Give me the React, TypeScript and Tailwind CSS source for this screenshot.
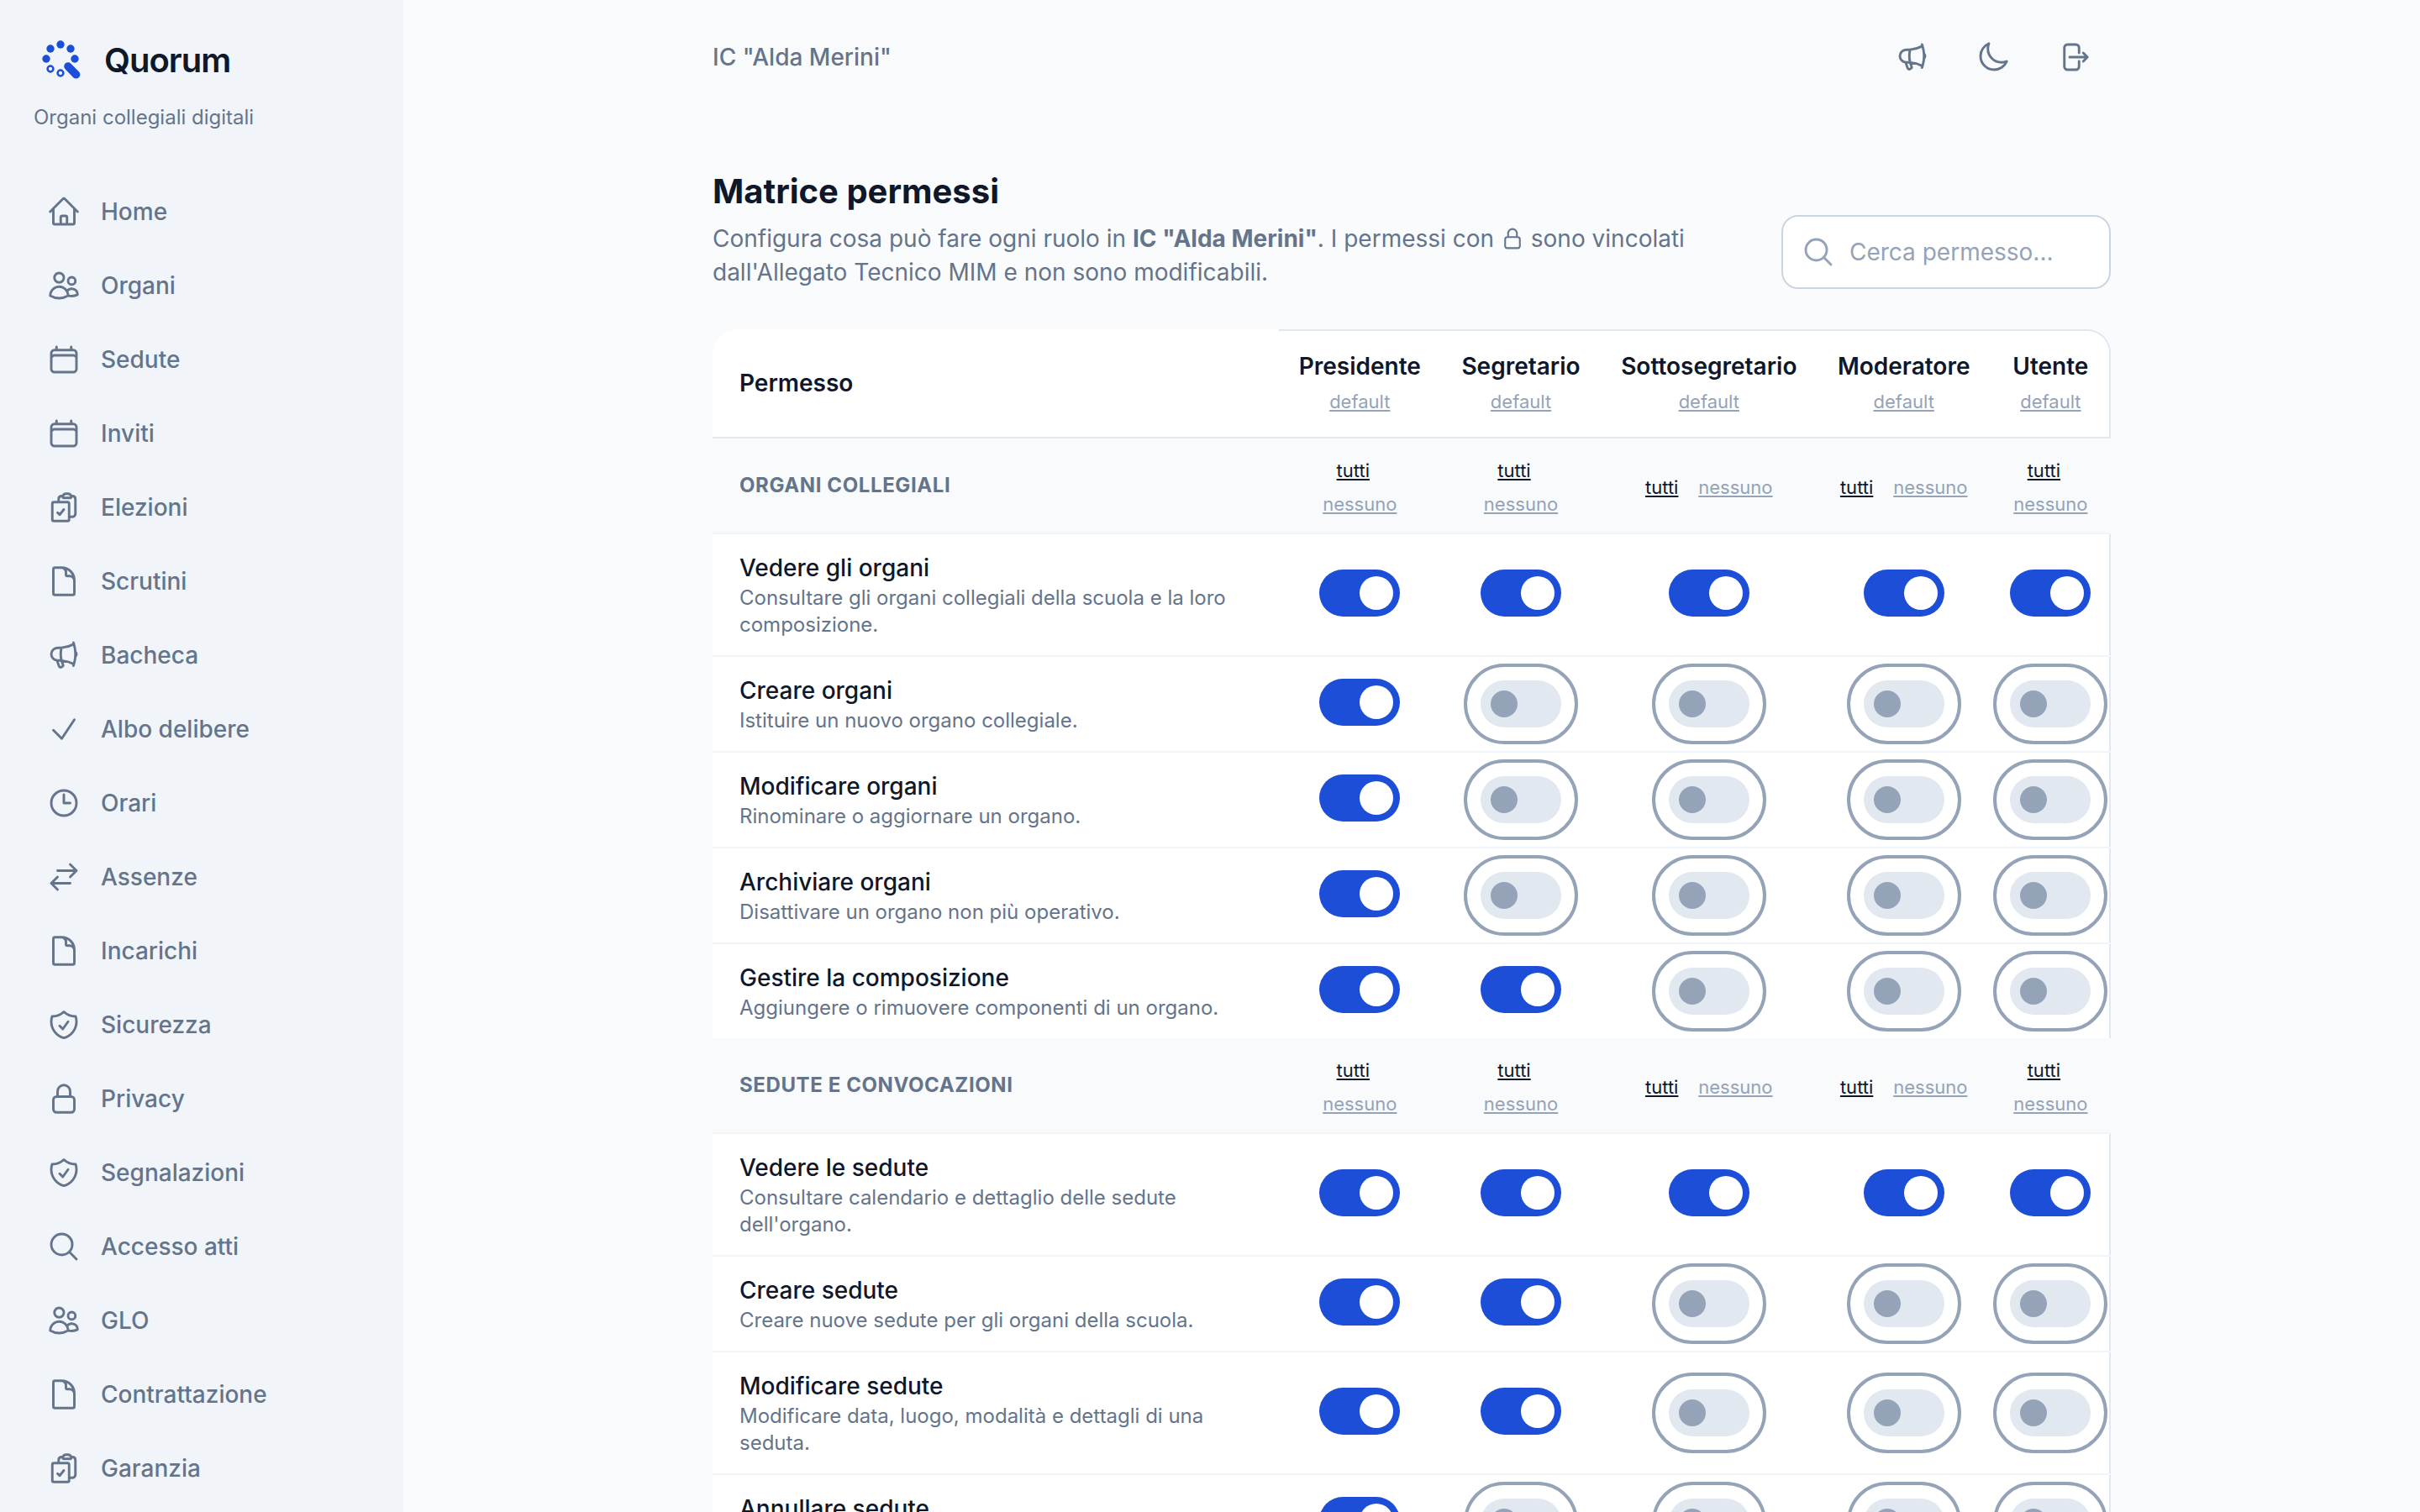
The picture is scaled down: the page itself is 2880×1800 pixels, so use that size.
import React from "react";
import type { IconType } from "react-icons";
import {
  HiOutlineArrowRightOnRectangle,
  HiOutlineArrowsRightLeft,
  HiOutlineCalendar,
  HiOutlineCheck,
  HiOutlineClipboardDocumentCheck,
  HiOutlineClock,
  HiOutlineDocument,
  HiOutlineHome,
  HiOutlineLockClosed,
  HiOutlineMagnifyingGlass,
  HiOutlineMegaphone,
  HiOutlineMoon,
  HiOutlineShieldCheck,
  HiOutlineUsers,
} from "react-icons/hi2";

const NAV: { label: string; icon: IconType }[] = [
  { label: "Home", icon: HiOutlineHome },
  { label: "Organi", icon: HiOutlineUsers },
  { label: "Sedute", icon: HiOutlineCalendar },
  { label: "Inviti", icon: HiOutlineCalendar },
  { label: "Elezioni", icon: HiOutlineClipboardDocumentCheck },
  { label: "Scrutini", icon: HiOutlineDocument },
  { label: "Bacheca", icon: HiOutlineMegaphone },
  { label: "Albo delibere", icon: HiOutlineCheck },
  { label: "Orari", icon: HiOutlineClock },
  { label: "Assenze", icon: HiOutlineArrowsRightLeft },
  { label: "Incarichi", icon: HiOutlineDocument },
  { label: "Sicurezza", icon: HiOutlineShieldCheck },
  { label: "Privacy", icon: HiOutlineLockClosed },
  { label: "Segnalazioni", icon: HiOutlineShieldCheck },
  { label: "Accesso atti", icon: HiOutlineMagnifyingGlass },
  { label: "GLO", icon: HiOutlineUsers },
  { label: "Contrattazione", icon: HiOutlineDocument },
  { label: "Garanzia", icon: HiOutlineClipboardDocumentCheck },
];

const ROLES = ["Presidente", "Segretario", "Sottosegretario", "Moderatore", "Utente"];

type Permission = { title: string; description?: string; granted: number };
type Category = { name: string; permissions: Permission[] };

// `granted` is the number of roles, from the first column on, that hold the permission.
const CATEGORIES: Category[] = [
  {
    name: "Organi collegiali",
    permissions: [
      {
        title: "Vedere gli organi",
        description: "Consultare gli organi collegiali della scuola e la loro composizione.",
        granted: 5,
      },
      { title: "Creare organi", description: "Istituire un nuovo organo collegiale.", granted: 1 },
      { title: "Modificare organi", description: "Rinominare o aggiornare un organo.", granted: 1 },
      { title: "Archiviare organi", description: "Disattivare un organo non più operativo.", granted: 1 },
      {
        title: "Gestire la composizione",
        description: "Aggiungere o rimuovere componenti di un organo.",
        granted: 2,
      },
    ],
  },
  {
    name: "Sedute e convocazioni",
    permissions: [
      {
        title: "Vedere le sedute",
        description: "Consultare calendario e dettaglio delle sedute dell'organo.",
        granted: 5,
      },
      { title: "Creare sedute", description: "Creare nuove sedute per gli organi della scuola.", granted: 2 },
      {
        title: "Modificare sedute",
        description: "Modificare data, luogo, modalità e dettagli di una seduta.",
        granted: 2,
      },
      { title: "Annullare sedute", granted: 1 },
    ],
  },
];

const GRID = "grid grid-cols-[674px_192.6px_190.8px_256.8px_207px_142.4px]";
const LINK = "text-[22px] leading-none underline decoration-2 underline-offset-2";

function Logo() {
  return (
    <svg viewBox="0 0 64 64" className="size-16 text-[#1d4ed8]" fill="currentColor">
      <circle cx="15" cy="30" r="4.7" />
      <circle cx="20" cy="18" r="4.7" />
      <circle cx="32" cy="13" r="4.7" />
      <circle cx="44" cy="18" r="4.7" />
      <circle cx="49" cy="30" r="4.7" />
      <g fill="none" stroke="currentColor">
        <circle cx="20" cy="42" r="3.4" strokeWidth="2.5" />
        <circle cx="32" cy="47" r="3.4" strokeWidth="2.5" />
        <path d="M41 39l9.6 9.8" strokeWidth="9.6" strokeLinecap="round" />
      </g>
    </svg>
  );
}

function Sidebar() {
  return (
    <aside className="flex w-[480px] shrink-0 flex-col bg-[#f1f5f9]">
      <div className="px-10 pt-10">
        <div className="flex items-center gap-5">
          <Logo />
          <span className="text-[40px] leading-[56px] font-semibold tracking-tight text-[#0f172a]">Quorum</span>
        </div>
        <p className="mt-5 text-2xl leading-8 text-[#64748b]">Organi collegiali digitali</p>
      </div>
      <nav className="mt-14 flex flex-col gap-2 px-8">
        {NAV.map(({ label, icon: Icon }) => (
          <a key={label} className="flex h-20 shrink-0 items-center gap-6 px-6 text-[28px] font-medium text-[#64748b]">
            <Icon className="size-10 [stroke-width:1.75]" />
            {label}
          </a>
        ))}
      </nav>
    </aside>
  );
}

function Toggle({ on }: { on: boolean }) {
  if (on) {
    return (
      <span className="mb-1 flex h-14 w-24 items-center justify-end rounded-full bg-[#1d4ed8] px-2">
        <span className="size-10 rounded-full bg-white" />
      </span>
    );
  }
  return (
    <span className="flex h-14 w-24 items-center rounded-full bg-[#e2e8f0] px-3 outline-4 outline-offset-16 outline-[#94a3b8]">
      <span className="size-8 rounded-full bg-[#94a3b8]" />
    </span>
  );
}

function CategoryRows({ category }: { category: Category }) {
  return (
    <>
      <div className={`${GRID} h-28 items-center bg-[#f8fafc] text-[28px] leading-10`}>
        <div className="px-8 text-2xl font-bold tracking-wide text-[#64748b] uppercase">{category.name}</div>
        {ROLES.map((role) => (
          <div key={role} className="px-6 text-center">
            <span className={`${LINK} mr-4 text-[#0f172a]`}>tutti</span>{" "}
            <span className={`${LINK} text-[#94a3b8]`}>nessuno</span>
          </div>
        ))}
      </div>
      {category.permissions.map((p) => (
        <div key={p.title} className={`${GRID} min-h-[114px] border-t-2 border-[#f1f5f9]`}>
          <div className="relative bg-white px-8 py-5">
            <div className="text-[28px] leading-10 font-medium text-[#0f172a]">{p.title}</div>
            {p.description && <div className="text-2xl leading-8 text-[#64748b]">{p.description}</div>}
          </div>
          {ROLES.map((role, i) => (
            <div key={role} className="flex items-center justify-center">
              <Toggle on={i < p.granted} />
            </div>
          ))}
        </div>
      ))}
    </>
  );
}

export default function App() {
  return (
    <div className="flex h-[1800px] w-[2880px] overflow-hidden bg-[#fafbfd] font-['Inter',sans-serif] antialiased">
      <Sidebar />
      <div className="flex min-w-0 flex-1 flex-col">
        <header className="h-[136px] shrink-0 bg-[#f8fafc]">
          <div className="mx-auto flex h-full w-[1664px] items-center justify-between text-[#64748b]">
            <span className="text-[28px] font-medium">IC "Alda Merini"</span>
            <div className="flex gap-2">
              {[HiOutlineMegaphone, HiOutlineMoon, HiOutlineArrowRightOnRectangle].map((Icon, i) => (
                <button key={i} className="flex size-[88px] items-center justify-center">
                  <Icon className="size-10 [stroke-width:1.75]" />
                </button>
              ))}
            </div>
          </div>
        </header>
        <main className="mx-auto w-[1664px] pt-16">
          <div className="flex items-end justify-between">
            <div className="w-[1220px]">
              <h1 className="text-[40px] leading-[56px] font-bold text-[#0f172a]">Matrice permessi</h1>
              <p className="mt-2 text-[28px] leading-10 text-[#64748b]">
                Configura cosa può fare ogni ruolo in <strong className="font-bold">IC "Alda Merini"</strong>. I permessi
                con <HiOutlineLockClosed className="inline size-7 align-[-4px] [stroke-width:1.75]" /> sono vincolati
                dall'Allegato Tecnico MIM e non sono modificabili.
              </p>
            </div>
            <label className="flex h-[88px] w-[392px] items-center gap-[17px] rounded-[20px] border-2 border-[#cbd5e1] bg-white px-[22px] text-[#94a3b8]">
              <HiOutlineMagnifyingGlass className="size-10 shrink-0 [stroke-width:1.75]" />
              <span className="text-[28px]">Cerca permesso...</span>
            </label>
          </div>
          <section className="mt-12 overflow-hidden rounded-[28px] bg-white inset-ring-2 inset-ring-[#e2e8f0]">
            <div className={`${GRID} h-[130px] border-b-2 border-[#e2e8f0] text-[28px] leading-10 font-semibold text-[#0f172a]`}>
              <div className="flex items-center bg-white px-8">Permesso</div>
              {ROLES.map((role) => (
                <div key={role} className="flex flex-col justify-center text-center">
                  <div>{role}</div>
                  <div className="font-normal">
                    <span className={`${LINK} text-[#94a3b8]`}>default</span>
                  </div>
                </div>
              ))}
            </div>
            {CATEGORIES.map((category) => (
              <CategoryRows key={category.name} category={category} />
            ))}
          </section>
        </main>
      </div>
    </div>
  );
}
